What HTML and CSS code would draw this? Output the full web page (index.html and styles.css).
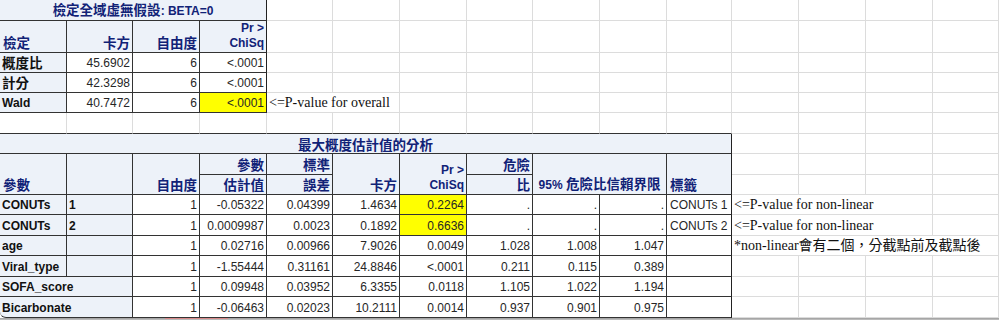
FILE: index.html
```html
<!DOCTYPE html>
<html lang="zh-Hant">
<head>
<meta charset="utf-8">
<title>SAS 輸出</title>
<link rel="stylesheet" href="styles.css">
</head>
<body>
<div class="sheet">
<table class="grid">
<colgroup>
<col class="w67"><col class="w66"><col class="w67"><col class="w67"><col class="w66"><col class="w67"><col class="w67"><col class="w66"><col class="w67"><col class="w67"><col class="w65"><col class="w67"><col class="w67"><col class="w67"><col class="w66">
</colgroup>
<tr class="h21">
<td colspan="4" class="t title edge-r"><span class="zh">檢定全域虛無假設</span>: BETA=0</td>
<td></td><td></td><td></td><td></td><td></td><td></td><td></td><td></td><td></td><td></td><td></td>
</tr>
<tr class="h32">
<td class="t hd l zh">檢定</td><td class="t hd r zh">卡方</td><td class="t hd r zh">自由度</td><td class="t hd r edge-r">Pr &gt;<br>ChiSq</td>
<td></td><td></td><td></td><td></td><td></td><td></td><td></td><td></td><td></td><td></td><td></td>
</tr>
<tr class="h20">
<td class="t rh zh">概度比</td><td class="t n">45.6902</td><td class="t n">6</td><td class="t n edge-r">&lt;.0001</td>
<td></td><td></td><td></td><td></td><td></td><td></td><td></td><td></td><td></td><td></td><td></td>
</tr>
<tr class="h20">
<td class="t rh zh">計分</td><td class="t n">42.3298</td><td class="t n">6</td><td class="t n edge-r">&lt;.0001</td>
<td></td><td></td><td></td><td></td><td></td><td></td><td></td><td></td><td></td><td></td><td></td>
</tr>
<tr class="h20">
<td class="t rh">Wald</td><td class="t n">40.7472</td><td class="t n">6</td><td class="t n hl edge-r">&lt;.0001</td>
<td colspan="2" class="note">&lt;=P-value for overall</td>
<td></td><td></td><td></td><td></td><td></td><td></td><td></td><td></td><td></td>
</tr>
<tr class="h21">
<td class="db"></td><td class="db"></td><td class="db"></td><td class="db"></td><td class="db"></td><td class="db"></td><td class="db"></td><td class="db"></td><td class="db"></td><td class="db"></td><td class="db"></td>
<td></td><td></td><td></td><td></td>
</tr>
<tr class="h20">
<td colspan="11" class="t title edge-r zh">最大概度估計值的分析</td>
<td></td><td></td><td></td><td></td>
</tr>
<tr class="h21">
<td rowspan="2" class="t hd l zh">參數</td>
<td rowspan="2" class="t hd"></td>
<td rowspan="2" class="t hd r zh">自由度</td>
<td class="t hd r zh">參數</td>
<td class="t hd r zh">標準</td>
<td rowspan="2" class="t hd r zh">卡方</td>
<td rowspan="2" class="t hd r">Pr &gt;<br>ChiSq</td>
<td class="t hd r zh">危險</td>
<td rowspan="2" colspan="2" class="t hd c">95% <span class="zh">危險比信賴界限</span></td>
<td rowspan="2" class="t hd l edge-r zh">標籤</td>
<td></td><td></td><td></td><td></td>
</tr>
<tr class="h20">
<td class="t hd r zh">估計值</td>
<td class="t hd r zh">誤差</td>
<td class="t hd r zh">比</td>
<td></td><td></td><td></td><td></td>
</tr>
<tr class="h20">
<td class="t rh">CONUTs</td><td class="t rh">1</td>
<td class="t n">1</td><td class="t n">-0.05322</td><td class="t n">0.04399</td><td class="t n">1.4634</td><td class="t n hl">0.2264</td>
<td class="t n">.</td><td class="t n">.</td><td class="t n">.</td><td class="t lab edge-r">CONUTs 1</td>
<td colspan="3" class="note">&lt;=P-value for non-linear</td><td></td>
</tr>
<tr class="h21">
<td class="t rh">CONUTs</td><td class="t rh">2</td>
<td class="t n">1</td><td class="t n">0.0009987</td><td class="t n">0.0023</td><td class="t n">0.1892</td><td class="t n hl">0.6636</td>
<td class="t n">.</td><td class="t n">.</td><td class="t n">.</td><td class="t lab edge-r">CONUTs 2</td>
<td colspan="3" class="note">&lt;=P-value for non-linear</td><td></td>
</tr>
<tr class="h20">
<td class="t rh">age</td><td class="t rh"></td>
<td class="t n">1</td><td class="t n">0.02716</td><td class="t n">0.00966</td><td class="t n">7.9026</td><td class="t n">0.0049</td>
<td class="t n">1.028</td><td class="t n">1.008</td><td class="t n">1.047</td><td class="t lab edge-r"></td>
<td colspan="4" class="note">*non-linear<span class="cjk">會有二個，分截點前及截點後</span></td>
</tr>
<tr class="h21">
<td class="t rh">Viral_type</td><td class="t rh"></td>
<td class="t n">1</td><td class="t n">-1.55444</td><td class="t n">0.31161</td><td class="t n">24.8846</td><td class="t n">&lt;.0001</td>
<td class="t n">0.211</td><td class="t n">0.115</td><td class="t n">0.389</td><td class="t lab edge-r"></td>
<td></td><td></td><td></td><td></td>
</tr>
<tr class="h20">
<td colspan="2" class="t rh">SOFA_score</td>
<td class="t n">1</td><td class="t n">0.09948</td><td class="t n">0.03952</td><td class="t n">6.3355</td><td class="t n">0.0118</td>
<td class="t n">1.105</td><td class="t n">1.022</td><td class="t n">1.194</td><td class="t lab edge-r"></td>
<td></td><td></td><td></td><td></td>
</tr>
<tr class="h21">
<td colspan="2" class="t rh corner">Bicarbonate</td>
<td class="t n">1</td><td class="t n">-0.06463</td><td class="t n">0.02023</td><td class="t n">10.2111</td><td class="t n">0.0014</td>
<td class="t n">0.937</td><td class="t n">0.901</td><td class="t n">0.975</td><td class="t lab edge-r"></td>
<td></td><td></td><td></td><td></td>
</tr>
</table>
<div class="frame"><span class="tab-mark"></span></div>
</div>
</body>
</html>
```

FILE: styles.css
```css
html, body {
  margin: 0;
  padding: 0;
  background: #ffffff;
}

body {
  width: 999px;
  height: 320px;
  overflow: hidden;
  font-family: "Liberation Sans", "Noto Sans CJK TC", Arial, sans-serif;
  font-size: 12px;
  color: #222222;
}

.sheet {
  width: 999px;
  background: #a8a8a8;
}

.grid {
  width: 999px;
  table-layout: fixed;
  border-collapse: separate;
  border-spacing: 0;
  background: #ffffff;
}

.w65 { width: 65px; }
.w66 { width: 66px; }
.w67 { width: 67px; }

.h20 { height: 20px; }
.h21 { height: 21px; }
.h32 { height: 32px; }

.grid td {
  box-sizing: border-box;
  padding: 0 3px 2px 3px;
  border-right: 1px solid #dcdcdc;
  border-bottom: 1px solid #dcdcdc;
  background: #ffffff;
  white-space: nowrap;
  overflow: hidden;
  vertical-align: bottom;
  line-height: 14px;
}

.grid td.t {
  border-right-color: #333333;
  border-bottom-color: #333333;
}

.grid td.db {
  border-bottom-color: #333333;
}

.grid td.edge-r {
  border-right-color: #222222;
}

.grid td.title {
  background: #edf2f9;
  color: #112277;
  font-weight: bold;
  text-align: center;
  vertical-align: middle;
  padding: 0 3px;
}

.grid td.hd {
  background: #edf2f9;
  color: #112277;
  font-weight: bold;
  line-height: 15px;
  padding-bottom: 1px;
}

.zh {
  font-family: "Noto Sans CJK TC", "Liberation Sans", sans-serif;
  font-size: 13.5px;
}

.grid td.zh {
  line-height: 14px;
  padding-bottom: 3px;
}

.grid td.title.zh {
  padding-bottom: 0;
}

.l { text-align: left; }
.r { text-align: right; }
.c { text-align: center; }

.grid td.hd.r {
  padding-right: 2px;
}

.grid td.rh {
  background: #edf2f9;
  color: #111111;
  font-weight: bold;
  text-align: left;
  padding-left: 2px;
}

.grid td.n {
  text-align: right;
  padding-right: 2px;
  color: #262626;
}

.grid td.hl {
  background: #ffff00;
}

.grid td.lab {
  text-align: left;
  color: #262626;
}

.grid td.note {
  font-family: "Liberation Serif", "Noto Sans CJK TC", serif;
  font-size: 14px;
  color: #111111;
  padding-left: 2px;
  overflow: visible;
}

.cjk {
  font-family: "Noto Sans CJK TC", sans-serif;
  font-size: 14px;
}

.grid td.corner {
  border-bottom-left-radius: 6px;
}

.frame {
  height: 2px;
  background: linear-gradient(#9c9c9c, #c4c4c4);
  padding-left: 165px;
}

.tab-mark {
  display: block;
  width: 63px;
  height: 1px;
  background: #d98a8a;
}
```
